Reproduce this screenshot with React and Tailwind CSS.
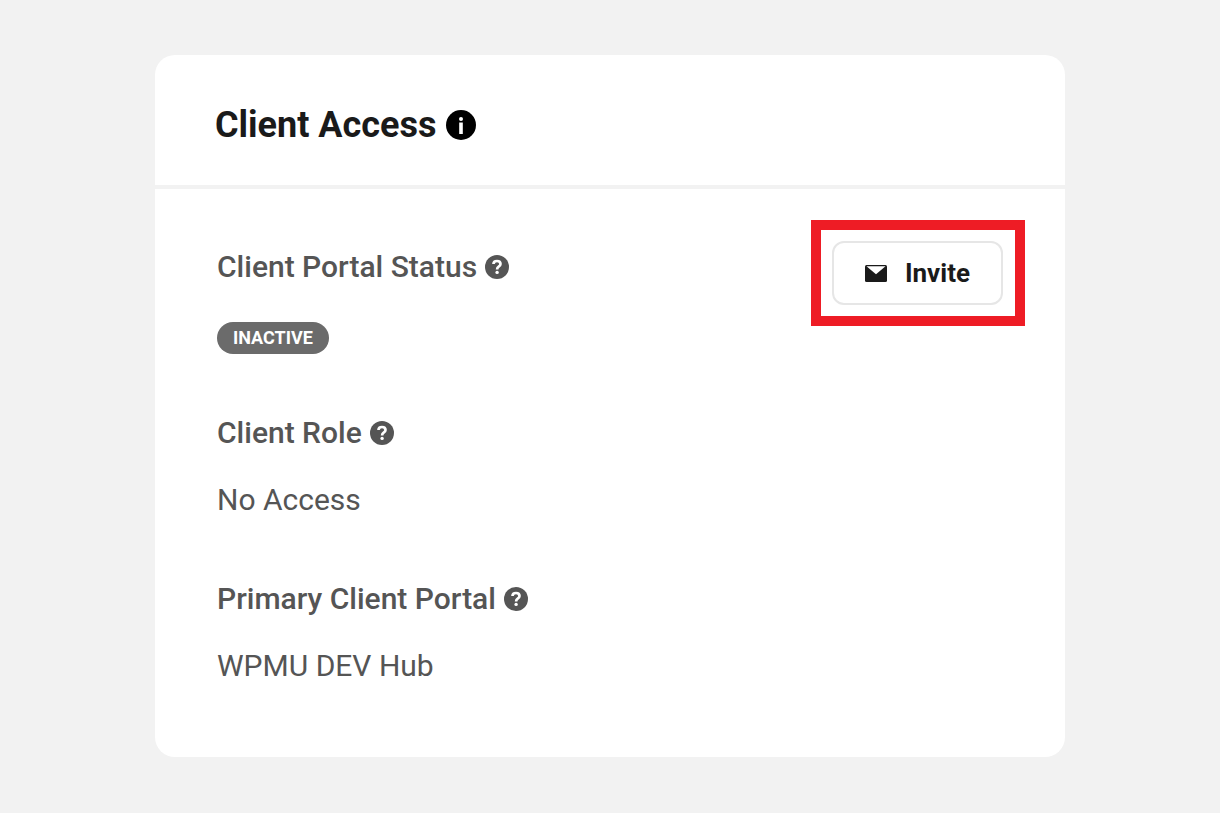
import React from 'react';

const InfoIcon = () => (
  <svg viewBox="0 0 30 30" className="size-[30px] shrink-0" aria-hidden="true">
    <circle cx="15" cy="15" r="15" fill="#000" />
    <circle cx="15" cy="9" r="2" fill="#fff" />
    <rect x="13.2" y="12.5" width="3.6" height="11.5" fill="#fff" />
  </svg>
);

const HelpIcon = () => (
  <svg viewBox="0 0 24 24" className="size-6 shrink-0" aria-hidden="true">
    <circle cx="12" cy="12" r="12" fill="#555" />
    <path d="M8.5 9C8.5 7 10 6 12 6s3.500 1 3.500 2.900c0 1.500-.9 2.100-1.900 2.800-.9.600-1.500 1.200-1.500 2.700" fill="none" stroke="#fff" strokeWidth="2.700" />
    <circle cx="12.1" cy="17.4" r="1.7" fill="#fff" />
  </svg>
);

const MailIcon = () => (
  <svg viewBox="0 0 22 17" className="h-[17px] w-[22px] shrink-0" aria-hidden="true">
    <rect width="22" height="17" rx="1.5" fill="#1a1a1a" />
    <path d="M1.5 1.200h19L11 9.200z" fill="#fff" />
  </svg>
);

const Field = ({ label, children }) => (
  <div>
    <dt className="flex items-center gap-2 text-[30px] leading-10 font-medium">
      {label}
      <HelpIcon />
    </dt>
    {children}
  </div>
);

const App = () => {
  return (
    <main className="min-h-screen bg-[#f2f2f2] px-6 py-[55px] font-['Roboto',sans-serif] text-[#555]">
      <section className="mx-auto max-w-[910px] rounded-[20px] bg-white">
        <header className="flex items-center gap-[10px] border-b-4 border-[#f2f2f2] px-[60px] pt-[50px] pb-10">
          <h1 className="text-[36px] leading-10 font-bold text-[#1a1a1a]">Client Access</h1>
          <InfoIcon />
        </header>

        <div className="flex items-start justify-between pr-10 pl-[62px]">
          <dl className="flex flex-col gap-[59px] pt-[58px] pb-[71px]">
            <Field label="Client Portal Status">
              <dd className="mt-[35px] flex">
                <span className="rounded-full bg-[#6b6b6b] px-4 text-[18px] leading-8 font-bold text-white">INACTIVE</span>
              </dd>
            </Field>
            <Field label="Client Role">
              <dd className="mt-[27px] text-[30px] leading-10">No Access</dd>
            </Field>
            <Field label="Primary Client Portal">
              <dd className="mt-[27px] text-[30px] leading-10">WPMU DEV Hub</dd>
            </Field>
          </dl>

          <div className="mt-[31px] border-[10px] border-[#ee1c25] py-[11px] pr-3 pl-[11px]">
            <button type="button" className="flex h-16 items-center gap-[18px] rounded-xl border-2 border-[#e6e6e6] bg-white px-[31px] text-[26px] font-bold text-[#1a1a1a]">
              <MailIcon />
              Invite
            </button>
          </div>
        </div>
      </section>
    </main>
  );
};

export default App;
